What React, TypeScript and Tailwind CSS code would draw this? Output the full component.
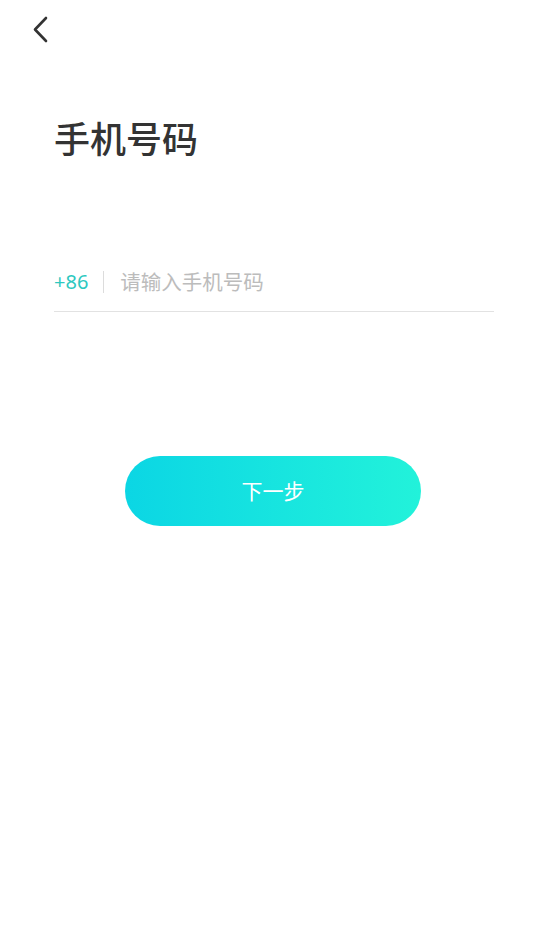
import React from "react";

export default function App() {
  const cjk = { fontFamily: '"Noto Sans CJK SC", "Noto Sans", sans-serif' };
  return (
    <div className="w-[546px] h-[952px] bg-white relative" style={cjk}>
      <div className="h-[60px] pl-[30px] pt-[15px]">
        <svg width="22" height="30" viewBox="0 0 22 30" fill="none">
          <path d="M16 3 L5 14.5 L16 26" stroke="#333" strokeWidth="2.6" strokeLinecap="round" strokeLinejoin="round" />
        </svg>
      </div>
      <div className="pl-[54px] pt-[52px]">
        <h1 className="text-[36px] leading-[50px] font-medium text-[#333]">手机号码</h1>
      </div>
      <div className="mx-[54px] w-[440px] mt-[98px] border-b border-[#e2e2e2] flex items-center h-[52px] pb-[8px]">
        <span className="text-[20px] text-[#2ec8c0]" style={{ fontFamily: '"Noto Sans", sans-serif' }}>+86</span>
        <span className="ml-[15px] w-px h-[22px] bg-[#dcdcdc]"></span>
        <span className="ml-[16px] text-[20.5px] text-[#bcbcbc]">请输入手机号码</span>
      </div>
      <div className="flex justify-center mt-[144px]">
        <button className="w-[296px] h-[70px] rounded-full bg-gradient-to-r from-[#0bd6e4] to-[#22f2da] text-white text-[21px]">
          下一步
        </button>
      </div>
    </div>
  );
}
